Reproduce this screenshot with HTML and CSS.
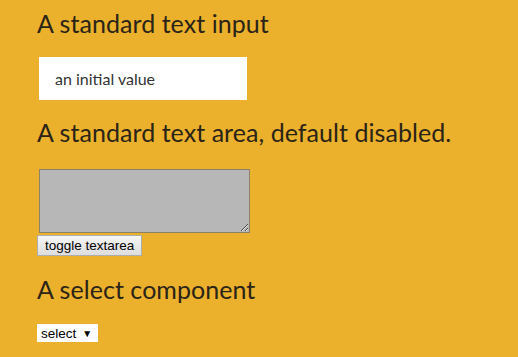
FILE: index.html
```html
<!DOCTYPE html>
<html>
<head>
<meta charset="utf-8">
<link rel="stylesheet" href="styles.css">
</head>
<body>
<main class="page">
  <h2 class="title">A standard text input</h2>
  <input class="text-input" type="text" value="an initial value">
  <h2 class="title title-2">A standard text area, default disabled.</h2>
  <div class="area-block">
    <textarea class="text-area" disabled></textarea>
    <button class="btn" type="button">toggle textarea</button>
  </div>
  <h2 class="title title-3">A select component</h2>
  <div class="select-box"><span>select</span><span class="arrow">▼</span></div>
</main>
</body>
</html>
```
FILE: styles.css
```css
html, body {
  margin: 0;
  padding: 0;
  background: #ebb02c;
  height: 100%;
}
.page {
  padding: 8px 0 0 37px;
  display: flex;
  flex-direction: column;
  align-items: flex-start;
  font-family: Lato, "Open Sans", sans-serif;
}
.title {
  margin: 0;
  font-weight: 400;
  font-size: 25px;
  line-height: 30px;
  color: #2a2418;
  letter-spacing: 0.05px;
}
.text-input {
  margin: 19px 0 0 2px;
  width: 208px;
  height: 43px;
  box-sizing: border-box;
  border: none;
  background: #fff;
  padding: 0 16px;
  font-family: Lato, "Open Sans", sans-serif;
  font-size: 16px;
  color: #333;
  outline: none;
}
.title-2 {
  margin-top: 17px;
}
.area-block {
  margin-top: 22px;
  display: flex;
  flex-direction: column;
  align-items: flex-start;
}
.text-area {
  margin: 0 0 0 2px;
  width: 211px;
  height: 64px;
  box-sizing: border-box;
  border: 1px solid #8c8066;
  background: #b7b7b7;
  padding: 0;
  display: block;
}
.btn {
  margin-top: 2px;
  font-family: "Liberation Sans", Arial, sans-serif;
  font-size: 13.5px;
  color: #000;
  height: 21px;
  padding: 0 7px;
  border: 1px solid #adadad;
  border-radius: 0;
  background: linear-gradient(#f6f6f6, #dddddd);
  line-height: 19px;
}
.title-3 {
  margin-top: 18px;
}
.select-box {
  margin-top: 20px;
  display: flex;
  align-items: center;
  gap: 6px;
  height: 18px;
  padding: 0 6px 0 4px;
  background: #fff;
  font-family: "Liberation Sans", Arial, sans-serif;
  font-size: 13.5px;
  color: #000;
}
.arrow {
  font-size: 10px;
}
```
